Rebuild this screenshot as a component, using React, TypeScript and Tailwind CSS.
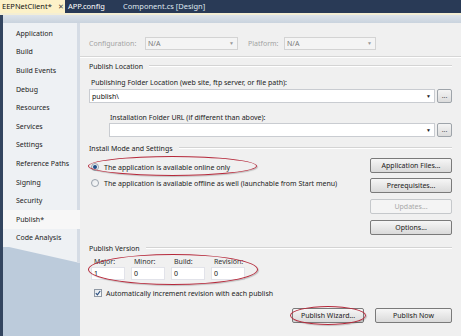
import React from 'react';

const tabs = [
  'Application',
  'Build',
  'Build Events',
  'Debug',
  'Resources',
  'Services',
  'Settings',
  'Reference Paths',
  'Signing',
  'Security',
  'Publish*',
  'Code Analysis',
];

function Btn({ label, w, disabled }: { label: string; w: string; disabled?: boolean }) {
  if (disabled) {
    return (
      <div className={`${w} h-[15px] flex items-center justify-center rounded-[2px] border border-[#c5c8cb] bg-[#f4f4f4] text-[#a8a8a8]`}>
        {label}
      </div>
    );
  }
  return (
    <div className={`${w} h-[15px] flex items-center justify-center rounded-[2px] border border-[#7a7a7a] bg-gradient-to-b from-[#f6f6f6] to-[#dadada] text-[#1a1a1a]`}>
      {label}
    </div>
  );
}

function Combo({ w, text, arrowOnly }: { w: string; text?: string; arrowOnly?: boolean }) {
  return (
    <div className={`${w} h-[14px] flex items-center justify-between bg-white border border-[#c9ccd1] pl-[2px] pr-[3px] text-[#111]`}>
      <span>{text}</span>
      {arrowOnly && <span className="text-[5px] leading-none text-[#222]">▼</span>}
    </div>
  );
}

function Dots() {
  return (
    <div className="w-[15px] h-[14px] flex items-end justify-center pb-[3px] rounded-[2px] border border-[#9ea4aa] bg-gradient-to-b from-[#f4f4f4] to-[#dcdcdc] text-[#555] text-[7px] leading-none">
      ...
    </div>
  );
}

function GroupHeader({ title }: { title: string }) {
  return (
    <div className="h-[10px] flex items-center gap-[6px] text-[#222]">
      <span>{title}</span>
      <div className="flex-1 flex flex-col">
        <div className="h-px bg-[#d4d4d4]" />
        <div className="h-px bg-white" />
      </div>
    </div>
  );
}

function Radio({ checked }: { checked?: boolean }) {
  return (
    <div className="w-[8px] h-[8px] rounded-full border border-[#9aa3ad] bg-gradient-to-br from-[#e6e9ec] to-[#fafafa] flex items-center justify-center">
      {checked && <div className="w-[4px] h-[4px] rounded-full bg-[#1e4f8a]" />}
    </div>
  );
}

export default function App() {
  return (
    <div className="relative w-[461px] h-[336px] overflow-hidden flex flex-col bg-[#293a56] font-['Noto_Sans',sans-serif] text-[7px] leading-none">
      {/* document tabs */}
      <div className="h-[13px] flex items-stretch text-[7.5px]">
        <div className="w-[65px] flex items-center gap-[6px] pl-[2px] bg-[#fcf1c8] text-[#111]">
          <span>EEPNetClient*</span>
          <span className="text-[7px] text-[#444]">✕</span>
        </div>
        <div className="flex items-center pl-[3px] w-[58px] text-white">APP.config</div>
        <div className="flex items-center text-[#dfe6ef]">Component.cs [Design]</div>
      </div>
      <div className="h-[2px] bg-[#f4eed4]" />

      <div className="flex-1 flex">
        <div className="w-[3px] bg-[#33455f]" />
        <div className="flex-1 flex flex-col">
          <div className="h-[8px] bg-gradient-to-b from-[#dde3ea] to-[#c9d3de]" />
          <div className="flex-1 flex">
            {/* property page tabs */}
            <div className="w-[77px] flex flex-col bg-[#bccbdb] relative">
              <div className="flex flex-col pt-[1px] bg-[#eef1f4] border-r-[3px] border-[#d5dce5]">
                {tabs.map((t) => (
                  <div
                    key={t}
                    className={`h-[18.6px] flex items-center pl-[13px] text-[#222] ${
                      t === 'Publish*' ? 'bg-[#f7f7f7] -mr-[3px]' : ''
                    }`}
                  >
                    {t}
                  </div>
                ))}
              </div>
              <svg width="77" height="16" className="block">
                <polygon points="0,0 77,0 77,16 6,0" fill="#eef1f4" />
                <polygon points="74,0 77,0 77,16 74,15" fill="#d5dce5" />
              </svg>
            </div>

            {/* publish page */}
            <div className="flex-1 flex flex-col bg-[#f0f0f0] pl-[9px] pr-[9px] pt-[14px]">
              <div className="h-[13px] flex items-center text-[#a3a3a3]">
                <span className="w-[56px]">Configuration:</span>
                <div className="w-[93px] h-[13px] flex items-center justify-between border border-[#d3d3d3] bg-[#f4f4f4] pl-[2px] pr-[3px] text-[#777]">
                  <span>N/A</span>
                  <span className="text-[5px] text-[#999]">▼</span>
                </div>
                <span className="ml-[10px] w-[36px]">Platform:</span>
                <div className="w-[92px] h-[13px] flex items-center justify-between border border-[#d3d3d3] bg-[#f4f4f4] pl-[2px] pr-[3px] text-[#777]">
                  <span>N/A</span>
                  <span className="text-[5px] text-[#999]">▼</span>
                </div>
              </div>
              <div className="mt-[6px] -mx-[9px] flex flex-col">
                <div className="h-px bg-[#d6d6d6]" />
                <div className="h-px bg-white" />
              </div>

              <div className="mt-[3px]">
                <GroupHeader title="Publish Location" />
              </div>
              <div className="mt-[6px] h-[10px] flex items-center pl-[2px] text-[#222]">
                Publishing Folder Location (web site, ftp server, or file path):
              </div>
              <div className="mt-[2px] flex items-center gap-[2px]">
                <Combo w="w-[346px]" text="publish\" arrowOnly />
                <Dots />
              </div>
              <div className="mt-[9px] h-[10px] flex items-center pl-[21px] text-[#222]">
                Installation Folder URL (if different than above):
              </div>
              <div className="mt-[1px] flex items-center gap-[2px] pl-[20px]">
                <Combo w="w-[326px]" arrowOnly />
                <Dots />
              </div>

              <div className="mt-[6px]">
                <GroupHeader title="Install Mode and Settings" />
              </div>
              <div className="mt-[5px] flex justify-between">
                <div className="flex flex-col gap-[4px] pt-[3px] pl-[2px] text-[#222]">
                  <div className="h-[12px] flex items-center gap-[5px]">
                    <Radio checked />
                    <span>The application is available online only</span>
                  </div>
                  <div className="h-[12px] flex items-center gap-[5px]">
                    <Radio />
                    <span>The application is available offline as well (launchable from Start menu)</span>
                  </div>
                </div>
                <div className="flex flex-col">
                  <Btn label="Application Files..." w="w-[82px]" />
                  <div className="mt-[5px]">
                    <Btn label="Prerequisites..." w="w-[82px]" />
                  </div>
                  <div className="mt-[6px]">
                    <Btn label="Updates..." w="w-[82px]" disabled />
                  </div>
                  <div className="mt-[6px]">
                    <Btn label="Options..." w="w-[82px]" />
                  </div>
                </div>
              </div>

              <div className="mt-[8px]">
                <GroupHeader title="Publish Version" />
              </div>
              <div className="mt-[3px] flex gap-[6px] pl-[2px] text-[#333]">
                {['Major:', 'Minor:', 'Build:', 'Revision:'].map((l) => (
                  <div key={l} className="w-[34px] h-[10px] flex items-center pl-[3px]">
                    {l}
                  </div>
                ))}
              </div>
              <div className="mt-[1px] flex gap-[6px] pl-[2px] text-[#111]">
                {['1', '0', '0', '0'].map((v, i) => (
                  <div key={i} className="w-[34px] h-[13px] flex items-center pl-[2px] bg-white border border-[#e2e3ea]">
                    {v}
                  </div>
                ))}
              </div>
              <div className="mt-[8px] h-[10px] flex items-center gap-[4px] pl-[5px] text-[#222]">
                <div className="w-[8px] h-[8px] flex items-center justify-center border border-[#8f98a3] bg-gradient-to-br from-[#e3e7eb] to-[#fafafa]">
                  <svg width="6" height="6" viewBox="0 0 6 6">
                    <path d="M0.8 3.2 L2.4 4.8 L5.2 1" stroke="#2a4f80" strokeWidth="1.2" fill="none" />
                  </svg>
                </div>
                <span>Automatically increment revision with each publish</span>
              </div>
              <div className="mt-[10px] flex justify-end gap-[11px]">
                <Btn label="Publish Wizard..." w="w-[72px]" />
                <Btn label="Publish Now" w="w-[77px]" />
              </div>
            </div>
          </div>
        </div>
      </div>

      {/* red highlight marks */}
      <div className="absolute left-[88px] top-[156px] w-[169px] h-[20px] rounded-[50%] border-[1.5px] border-[#b5283a] shadow-[1px_1px_1px_rgba(0,0,0,0.2)]" />
      <div className="absolute left-[88px] top-[254px] w-[170px] h-[31px] rounded-[50%] border-[1.5px] border-[#b5283a] shadow-[1px_1px_1px_rgba(0,0,0,0.2)]" />
      <div className="absolute left-[290px] top-[306px] w-[76px] h-[19px] rounded-[50%] border-[1.5px] border-[#b5283a] shadow-[1px_1px_1px_rgba(0,0,0,0.2)]" />
    </div>
  );
}
